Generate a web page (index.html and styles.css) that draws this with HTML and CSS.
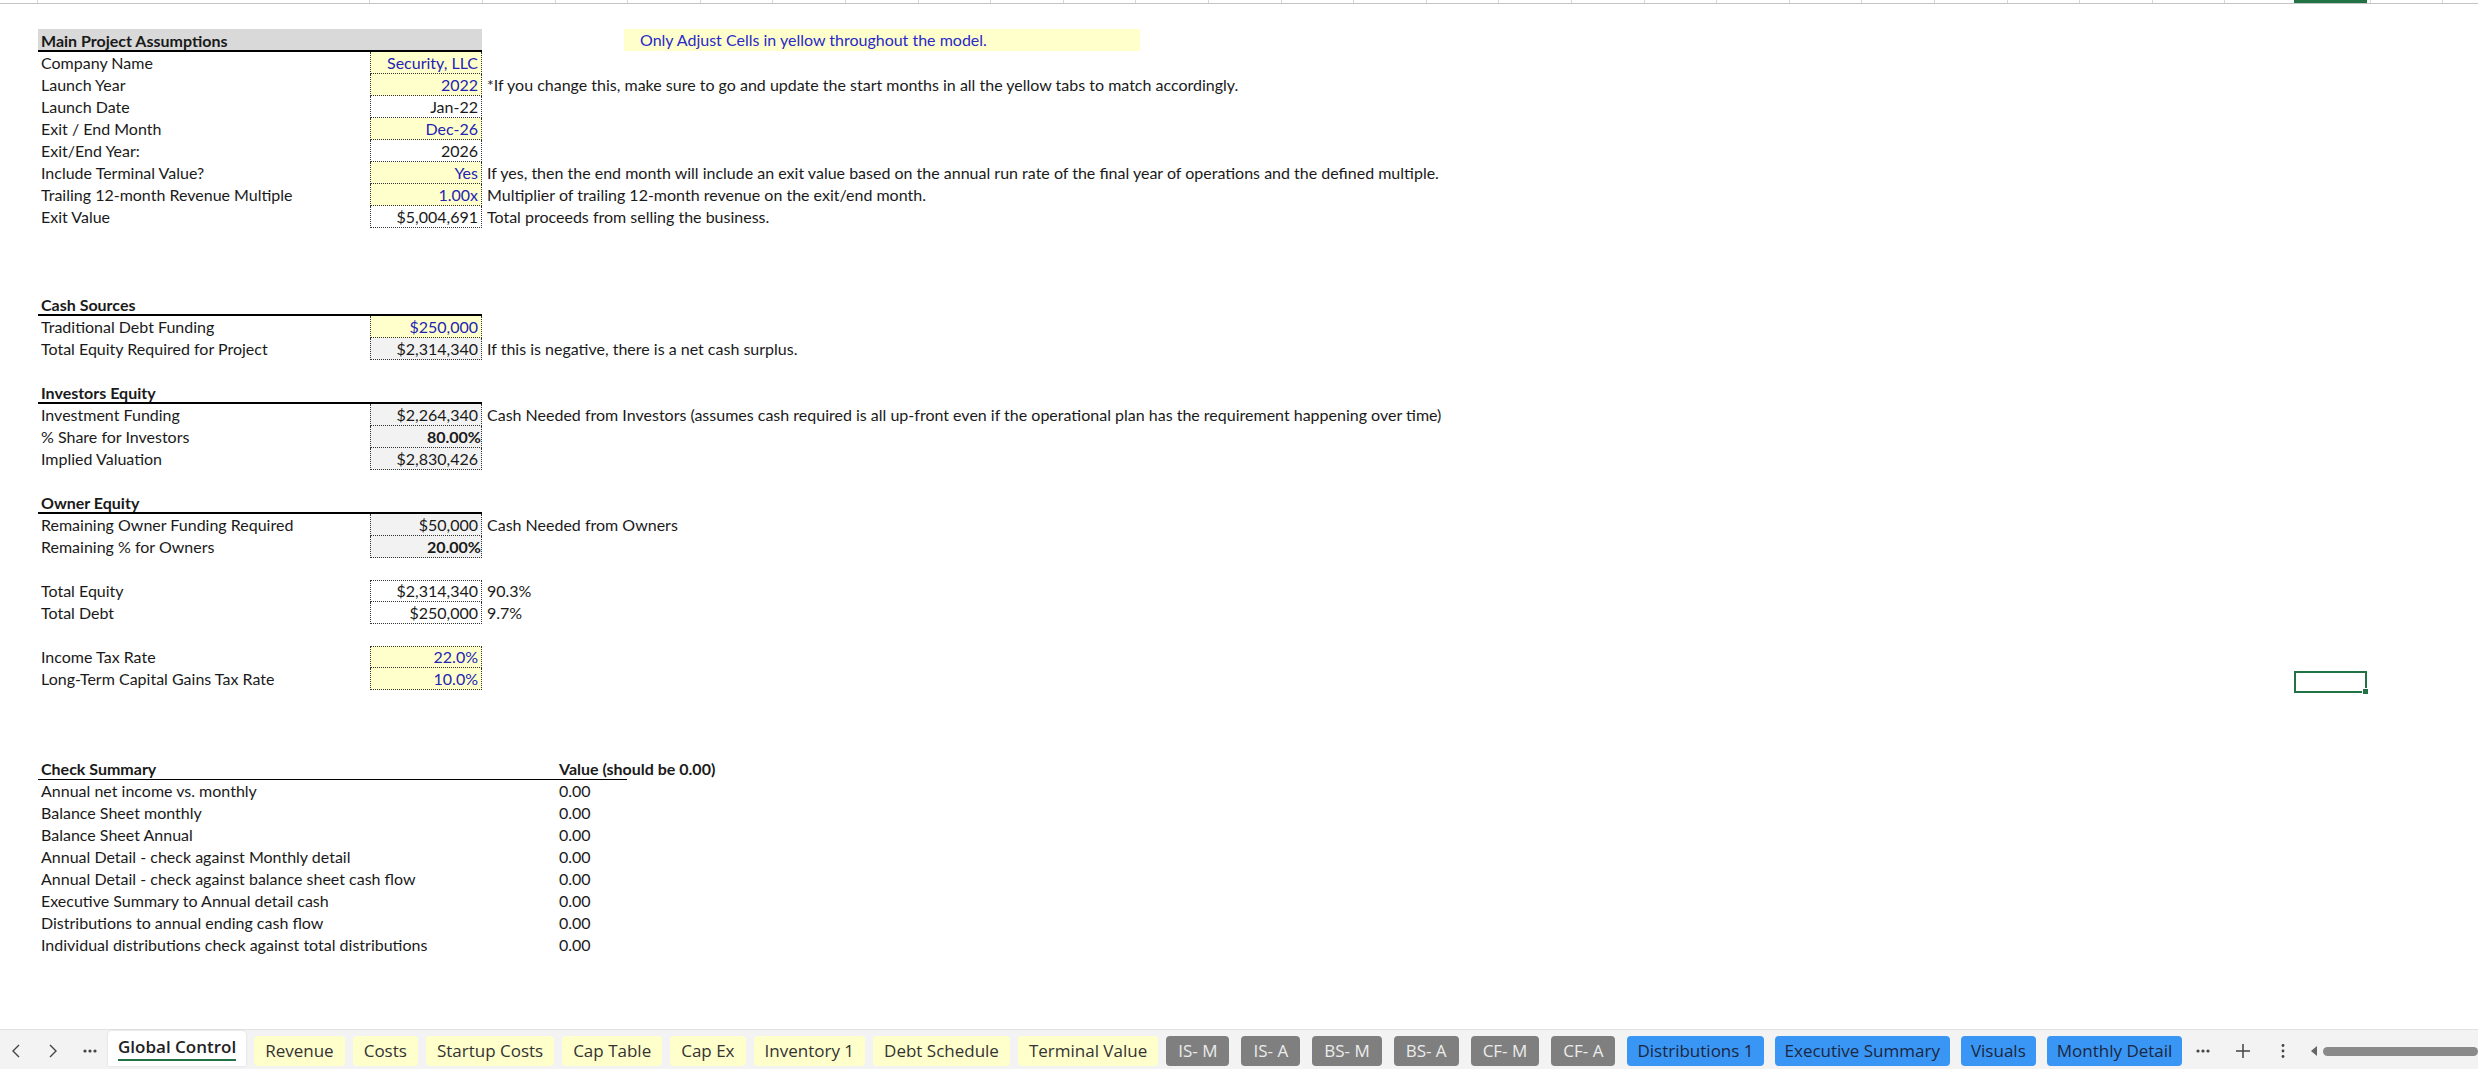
FILE: index.html
```html
<!DOCTYPE html>
<html lang="en">
<head>
  <meta charset="UTF-8" />
  <title>Global Control</title>
  <link rel="stylesheet" href="styles.css">
</head>
<body>
  <div class="sheet">
    <div class="colhead">
      <div class="ch c1"></div>
      <div class="ch c2"></div>
      <div class="ch c3"></div>
      <div class="ch rest"></div>
      <div class="colsel"></div>
    </div>

    <div class="grid">
      <div class="row main">
        <div class="lbl">Main Project Assumptions</div>
        <div class="val"></div>
        <div class="note"><span class="tip">Only Adjust Cells in yellow throughout the model.</span></div>
      </div>
      <div class="row"><div class="lbl">Company Name</div><div class="val in">Security, LLC</div><div class="note"></div></div>
      <div class="row"><div class="lbl">Launch Year</div><div class="val in">2022</div><div class="note">*If you change this, make sure to go and update the start months in all the yellow tabs to match accordingly.</div></div>
      <div class="row"><div class="lbl">Launch Date</div><div class="val">Jan-22</div><div class="note"></div></div>
      <div class="row"><div class="lbl">Exit / End Month</div><div class="val in">Dec-26</div><div class="note"></div></div>
      <div class="row"><div class="lbl">Exit/End Year:</div><div class="val">2026</div><div class="note"></div></div>
      <div class="row"><div class="lbl">Include Terminal Value?</div><div class="val in">Yes</div><div class="note">If yes, then the end month will include an exit value based on the annual run rate of the final year of operations and the defined multiple.</div></div>
      <div class="row"><div class="lbl">Trailing 12-month Revenue Multiple</div><div class="val in">1.00x</div><div class="note">Multiplier of trailing 12-month revenue on the exit/end month.</div></div>
      <div class="row"><div class="lbl">Exit Value</div><div class="val">$5,004,691</div><div class="note">Total proceeds from selling the business.</div></div>
      <div class="row blank"></div>
      <div class="row blank"></div>
      <div class="row blank"></div>

      <div class="row sect"><div class="lbl">Cash Sources</div><div class="val"></div><div class="note"></div></div>
      <div class="row"><div class="lbl">Traditional Debt Funding</div><div class="val in">$250,000</div><div class="note"></div></div>
      <div class="row"><div class="lbl">Total Equity Required for Project</div><div class="val calc">$2,314,340</div><div class="note">If this is negative, there is a net cash surplus.</div></div>
      <div class="row blank"></div>

      <div class="row sect"><div class="lbl">Investors Equity</div><div class="val"></div><div class="note"></div></div>
      <div class="row"><div class="lbl">Investment Funding</div><div class="val calc">$2,264,340</div><div class="note">Cash Needed from Investors (assumes cash required is all up-front even if the operational plan has the requirement happening over time)</div></div>
      <div class="row"><div class="lbl">% Share for Investors</div><div class="val calc bold">80.00%</div><div class="note"></div></div>
      <div class="row"><div class="lbl">Implied Valuation</div><div class="val calc">$2,830,426</div><div class="note"></div></div>
      <div class="row blank"></div>

      <div class="row sect"><div class="lbl">Owner Equity</div><div class="val"></div><div class="note"></div></div>
      <div class="row"><div class="lbl">Remaining Owner Funding Required</div><div class="val calc">$50,000</div><div class="note">Cash Needed from Owners</div></div>
      <div class="row"><div class="lbl">Remaining % for Owners</div><div class="val calc bold">20.00%</div><div class="note"></div></div>
      <div class="row blank"></div>

      <div class="row"><div class="lbl">Total Equity</div><div class="val top">$2,314,340</div><div class="note">90.3%</div></div>
      <div class="row"><div class="lbl">Total Debt</div><div class="val">$250,000</div><div class="note">9.7%</div></div>
      <div class="row blank"></div>

      <div class="row"><div class="lbl">Income Tax Rate</div><div class="val in top">22.0%</div><div class="note"></div></div>
      <div class="row"><div class="lbl">Long-Term Capital Gains Tax Rate</div><div class="val in">10.0%</div><div class="note"></div></div>
      <div class="row blank"></div>
      <div class="row blank"></div>
      <div class="row blank"></div>

      <div class="checks">
        <div class="crow chead"><div class="lbl">Check Summary</div><div class="cval">Value (should be 0.00)</div></div>
        <div class="crow"><div class="lbl">Annual net income vs. monthly</div><div class="cval">0.00</div></div>
        <div class="crow"><div class="lbl">Balance Sheet monthly</div><div class="cval">0.00</div></div>
        <div class="crow"><div class="lbl">Balance Sheet Annual</div><div class="cval">0.00</div></div>
        <div class="crow"><div class="lbl">Annual Detail - check against Monthly detail</div><div class="cval">0.00</div></div>
        <div class="crow"><div class="lbl">Annual Detail - check against balance sheet cash flow</div><div class="cval">0.00</div></div>
        <div class="crow"><div class="lbl">Executive Summary to Annual detail cash</div><div class="cval">0.00</div></div>
        <div class="crow"><div class="lbl">Distributions to annual ending cash flow</div><div class="cval">0.00</div></div>
        <div class="crow"><div class="lbl">Individual distributions check against total distributions</div><div class="cval">0.00</div></div>
      </div>
    </div>

    <!-- active cell -->
    <div class="selcell"><span class="handle"></span></div>
  </div>

  <div class="tabbar">
    <div class="nav">
      <span class="navbtn"><svg width="10" height="16" viewBox="0 0 10 16"><polyline points="8,2 2,8 8,14" fill="none" stroke="#444" stroke-width="1.4"/></svg></span>
      <span class="navbtn"><svg width="10" height="16" viewBox="0 0 10 16"><polyline points="2,2 8,8 2,14" fill="none" stroke="#444" stroke-width="1.4"/></svg></span>
      <span class="navbtn"><svg width="14" height="6" viewBox="0 0 14 6"><circle cx="2" cy="3" r="1.6" fill="#444"/><circle cx="7" cy="3" r="1.6" fill="#444"/><circle cx="12" cy="3" r="1.6" fill="#444"/></svg></span>
    </div>
    <div class="tab active">Global Control</div>
    <div class="tab y">Revenue</div>
    <div class="tab y">Costs</div>
    <div class="tab y">Startup Costs</div>
    <div class="tab y">Cap Table</div>
    <div class="tab y">Cap Ex</div>
    <div class="tab y">Inventory 1</div>
    <div class="tab y">Debt Schedule</div>
    <div class="tab y">Terminal Value</div>
    <div class="tab g">IS- M</div>
    <div class="tab g">IS- A</div>
    <div class="tab g">BS- M</div>
    <div class="tab g">BS- A</div>
    <div class="tab g">CF- M</div>
    <div class="tab g">CF- A</div>
    <div class="tab b">Distributions 1</div>
    <div class="tab b">Executive Summary</div>
    <div class="tab b">Visuals</div>
    <div class="tab b">Monthly Detail</div>
    <div class="tools">
      <span class="tool"><svg width="14" height="6" viewBox="0 0 14 6"><circle cx="2" cy="3" r="1.6" fill="#444"/><circle cx="7" cy="3" r="1.6" fill="#444"/><circle cx="12" cy="3" r="1.6" fill="#444"/></svg></span>
      <span class="tool"><svg width="16" height="16" viewBox="0 0 16 16"><path d="M8 1v14M1 8h14" stroke="#444" stroke-width="1.5"/></svg></span>
      <span class="tool"><svg width="4" height="16" viewBox="0 0 4 16"><circle cx="2" cy="2.5" r="1.4" fill="#444"/><circle cx="2" cy="8" r="1.4" fill="#444"/><circle cx="2" cy="13.5" r="1.4" fill="#444"/></svg></span>
    </div>
    <div class="hscroll">
      <svg width="6" height="10" viewBox="0 0 6 10"><polygon points="6,0 0,5 6,10" fill="#666"/></svg>
      <div class="thumb"></div>
    </div>
  </div>
</body>
</html>
```

FILE: styles.css
```css
html, body {
  margin: 0;
  height: 100%;
}
body {
  display: flex;
  flex-direction: column;
  background: #ffffff;
  font-family: Lato, "Liberation Sans", sans-serif;
  font-size: 16px;
  color: #1a1a1a;
  overflow: hidden;
}
.sheet {
  position: relative;
  flex: 1;
}
.colhead {
  display: flex;
  height: 3px;
  border-bottom: 1px solid #c4c4c4;
}
.ch {
  border-right: 1px solid #d6d6d6;
}
.c1 { width: 37px; }
.c2 { width: 331px; }
.c3 { width: 112px; }
.rest {
  flex: 1;
  border-right: none;
  background: repeating-linear-gradient(90deg, transparent 0 71.6px, #d6d6d6 71.6px 72.6px);
}
.colsel {
  position: absolute;
  left: 2294px;
  top: 0;
  width: 73px;
  height: 3px;
  background: #217346;
}
.grid {
  padding: 25px 0 0 38px;
}
.row {
  display: grid;
  grid-template-columns: 332px 112px 1fr;
  height: 22px;
  line-height: 22px;
}
.row > div, .crow > div {
  box-sizing: border-box;
  white-space: nowrap;
  height: 22px;
}
.lbl {
  padding-left: 3px;
}
.val {
  text-align: right;
  padding-right: 3px;
}
.row:not(.main):not(.sect):not(.blank) .val {
  border-left: 1px dotted #333;
  border-right: 1px dotted #333;
  border-bottom: 1px dotted #333;
}
.val.top {
  border-top: 1px dotted #333;
  line-height: 20px;
}
.val.in {
  background: #ffffcc;
  color: #2424b4;
}
.val.calc {
  background: #f2f2f2;
}
.val.bold {
  font-weight: 700;
  padding-right: 0;
}
.note {
  padding-left: 5px;
}
.row.main {
  height: 23px;
}
.main .lbl, .main .val {
  height: 23px;
  background: #d9d9d9;
  border-bottom: 2px solid #000;
  font-weight: 700;
  line-height: 23px;
}
.sect .lbl, .sect .val {
  border-bottom: 2px solid #000;
  font-weight: 700;
}
.tip {
  display: inline-block;
  margin-left: 137px;
  width: 500px;
  padding-left: 16px;
  background: #ffffcc;
  color: #2929c8;
  height: 22px;
}
.checks {
  padding-top: 2px;
}
.crow {
  display: grid;
  grid-template-columns: 517px 72px;
  height: 22px;
  line-height: 22px;
}
.cval {
  padding-left: 4px;
}
.chead .lbl, .chead .cval {
  border-bottom: 1px solid #000;
  font-weight: 700;
}
.selcell {
  position: absolute;
  left: 2294px;
  top: 671px;
  width: 73px;
  height: 22px;
  box-sizing: border-box;
  border: 2px solid #217346;
}
.handle {
  position: absolute;
  right: -4px;
  bottom: -4px;
  width: 5px;
  height: 5px;
  background: #217346;
  border: 1px solid #fff;
}
.tabbar {
  display: flex;
  align-items: flex-end;
  height: 36px;
  padding-bottom: 3px;
  box-sizing: content-box;
  background: #f3f3f3;
  border-top: 1px solid #e1e1e1;
  font-family: "Open Sans", "Noto Sans", sans-serif;
  font-size: 17px;
}
.nav {
  display: flex;
  align-items: center;
  height: 30px;
  margin-left: -2px;
  width: 110px;
}
.navbtn {
  width: 38px;
  display: flex;
  justify-content: center;
}
.tab {
  height: 30px;
  line-height: 30px;
  padding: 0 11px;
  margin-right: 8px;
  border-radius: 4px;
  white-space: nowrap;
}
.tab.active {
  height: 35px;
  line-height: 32px;
  background: #ffffff;
  border-radius: 4px 4px 0 0;
  box-shadow: 0 0 2px rgba(0,0,0,0.15);
  font-weight: 600;
  color: #222;
  padding: 0 10px;
  position: relative;
}
.tab.active::after {
  content: "";
  position: absolute;
  left: 10px;
  right: 10px;
  bottom: 5px;
  height: 2px;
  background: #217346;
}
.tab.y {
  background: #ffffcc;
  color: #333;
}
.tab.g {
  background: #7f7f7f;
  color: #ececec;
  margin-right: 12px;
  padding: 0 12px;
}
.tab.b {
  background: #3a96f4;
  color: #1b2741;
  margin-right: 11px;
  padding: 0 10px;
}
.tools {
  display: flex;
  align-items: center;
  height: 30px;
  margin-left: -10px;
}
.tool {
  width: 40px;
  display: flex;
  justify-content: center;
}
.hscroll {
  flex: 1;
  display: flex;
  align-items: center;
  height: 30px;
  gap: 6px;
  margin-left: 8px;
}
.thumb {
  flex: 1;
  height: 9px;
  border-radius: 5px;
  background: #8a8a8a;
}
```
